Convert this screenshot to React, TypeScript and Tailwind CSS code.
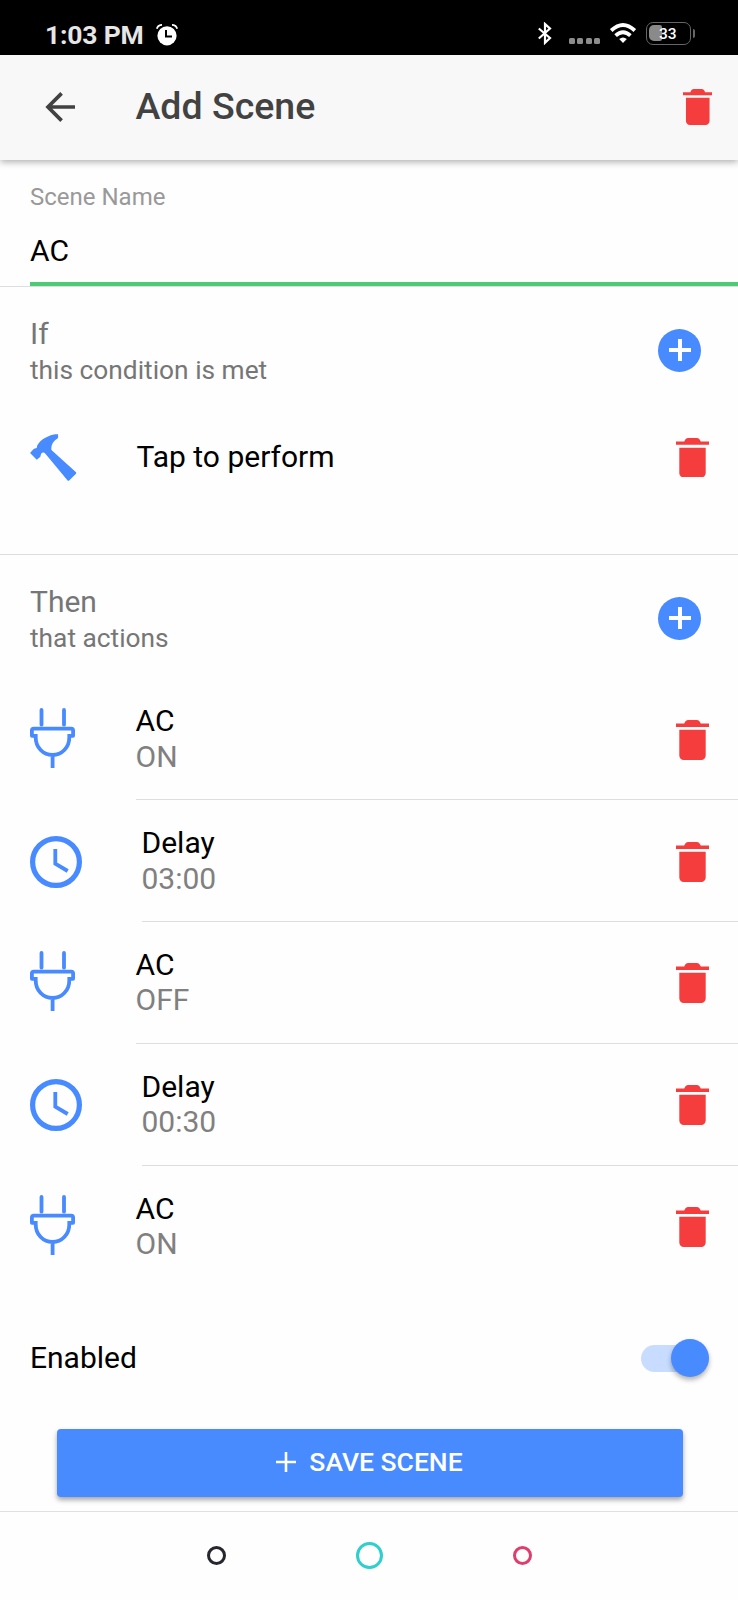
import { clsx } from 'clsx';

type IconProps = { className?: string };

const actions = [
  { type: 'device', title: 'AC', note: 'ON' },
  { type: 'delay', title: 'Delay', note: '03:00' },
  { type: 'device', title: 'AC', note: 'OFF' },
  { type: 'delay', title: 'Delay', note: '00:30' },
  { type: 'device', title: 'AC', note: 'ON' },
];

function TrashIcon({ className }: IconProps) {
  return (
    <svg viewBox="96 64 320 384" preserveAspectRatio="none" fill="#f53d3d" className={className}>
      <path d="M128 405c0 24 19 43 43 43h170c24 0 43-19 43-43V158H128v247zM416 98h-80c-10-22-18-34-38-34h-84c-20 0-28 12-38 34H96v32h320V98z" />
    </svg>
  );
}

function PlugIcon() {
  return (
    <svg viewBox="0 0 45 60" fill="none" stroke="#488aff" strokeWidth="3.8" className="-mt-[3px] h-[60px] w-[45px]">
      <path d="M11.5 1.9v14.8M34 1.9v14.8" strokeLinecap="round" />
      <path d="M5.7 27.8H1.9v-5.2q0-1.9 1.9-1.9h37.4q1.9 0 1.9 1.9v5.2h-3.8" strokeLinejoin="round" />
      <path d="M5.7 26v3.2c0 10.5 7.6 17.8 16.8 17.8s16.8-7.3 16.8-17.8V26M22.6 47v13" />
    </svg>
  );
}

function ClockIcon() {
  return (
    <svg viewBox="0 0 52 52" fill="none" stroke="#488aff" className="size-[52px]">
      <circle cx="26" cy="26" r="23.4" strokeWidth="5.2" />
      <path d="M25.3 13v14.6l12.4 7.4" strokeWidth="3.8" />
    </svg>
  );
}

function HammerIcon() {
  return (
    <svg viewBox="0 0 139 141" fill="#488aff" className="h-[47px] w-[46.5px]">
      <path d="M84 1H75C58 4 39 13 27 26c-5 6-7 11-7 16-4 1-7 1-10 4L0 57l20 20 10-8c2-3 2-8 3-10 4-5 9-5 13 0l66 80q3 3 6 0l19-19q3-3 0-6L64 48c-2-14 4-26 20-36z" />
    </svg>
  );
}

function AddButton() {
  return (
    <button className="mr-[37px] flex size-[43px] items-center justify-center rounded-full bg-[#488aff]">
      <svg viewBox="0 0 22 22" stroke="#fff" strokeWidth="4" className="size-[22px]">
        <path d="M11 0v22M0 11h22" />
      </svg>
    </button>
  );
}

function StatusBar() {
  return (
    <div className="flex h-[55px] items-start bg-black text-white">
      <span className="mt-[20px] ml-[45px] w-[100px] text-[26.5px] leading-[30px] font-bold tracking-[-0.2px] whitespace-nowrap text-[#e6e6e6]">
        1:03 PM
      </span>
      <svg viewBox="0 0 22 22" className="mt-[24px] ml-[11px] size-[22px]">
        <circle cx="11" cy="11.8" r="9.6" fill="#fff" />
        <path d="M.8 4.8Q1.8 1 6 .8M21.2 4.8Q20.2 1 16 .8" fill="none" stroke="#fff" strokeWidth="1.7" />
        <path d="M10 6v6.6h6" fill="none" stroke="#000" strokeWidth="2" />
      </svg>
      <div className="ml-auto flex">
        <svg viewBox="0 0 14 23" fill="none" stroke="#fff" strokeWidth="2.2" className="mt-[22px] h-[23px] w-[14px]">
          <path d="M.8 6.5 12 16l-5 4.8V2l5 4.6L.8 16.5" />
        </svg>
        <div className="mt-[38px] ml-[17px] flex gap-[2.3px]">
          {[0, 1, 2, 3].map((dot) => (
            <span key={dot} className="size-[6px] rounded-[1.5px] bg-[#8c8c8c]" />
          ))}
        </div>
        <svg viewBox="0 0 26 20" fill="none" stroke="#fff" strokeWidth="3.8" className="mt-[22.5px] ml-[10px] h-[20px] w-[26px]">
          <path d="M1.2 7.6q11.8-11.2 23.6 0" />
          <path d="M5.6 12.6q7.4-6.6 14.8 0" />
          <path d="m13 20-3.8-4q3.8-3 7.6 0z" fill="#fff" stroke="none" />
        </svg>
        <div className="relative mt-[22px] ml-[10px] h-[23px] w-[45px] rounded-[7px] border-[1.5px] border-[#666]">
          <div className="mt-[2px] ml-[2px] h-[16px] w-[13px] rounded-l-[5px] rounded-r-[2px] bg-[#8a8a8a]" />
          <span className="absolute top-[2px] left-[12px] text-[15.5px] leading-[19px] font-medium">33</span>
        </div>
        <span className="mt-[29px] mr-[43px] ml-[1.5px] h-[9px] w-[2.5px] rounded-r-full bg-[#666]" />
      </div>
    </div>
  );
}

function SectionHeading({ title, subtitle }: { title: string; subtitle: string }) {
  return (
    <div className="flex items-start justify-between pl-[30px] text-[#767676]">
      <div>
        <h2 className="text-[30px] leading-[37px]">{title}</h2>
        <p className="text-[26.3px] leading-[36px]">{subtitle}</p>
      </div>
      <div className="pt-[13.5px]">
        <AddButton />
      </div>
    </div>
  );
}

export default function App() {
  return (
    <div className="flex h-[1600px] w-[738px] flex-col bg-[#fefefe] font-[Roboto,sans-serif] text-black">
      <StatusBar />

      <header className="z-10 flex h-[105px] shrink-0 items-center bg-[#f8f8f8] pb-[2px] shadow-[0_2px_7px_rgba(0,0,0,0.32)]">
        <svg viewBox="0 0 30 30" fill="none" stroke="#424242" strokeWidth="3.7" className="ml-[45px] size-[30px]">
          <path d="M30 15H3M16.6 1.4 3 15l13.6 13.6" />
        </svg>
        <h1 className="ml-[60.5px] pb-[2px] text-[37.5px] leading-[44px] font-medium text-[#424242]">Add Scene</h1>
        <TrashIcon className="mr-[26px] ml-auto h-[36px] w-[29.5px]" />
      </header>

      <label className="block h-[127px] border-b border-[#dedede] pt-[24px]">
        <span className="block pl-[30px] text-[24px] leading-[26px] text-[#999]">Scene Name</span>
        <span className="mt-[23px] block pl-[30px] text-[30px] leading-[35px]">AC</span>
        <span className="mt-[14px] ml-[30px] block h-[4px] bg-[#4ccb74]" />
      </label>

      <section className="h-[268px] shrink-0 border-b border-[#dedede] pt-[28px]">
        <SectionHeading title="If" subtitle="this condition is met" />
        <div className="mt-[46px] flex items-center pr-[29px] pl-[30px]">
          <HammerIcon />
          <span className="ml-[60px] pb-[2px] text-[30px] leading-[35px]">Tap to perform</span>
          <TrashIcon className="ml-auto h-[39.5px] w-[33px]" />
        </div>
      </section>

      <section className="pt-[28px]">
        <SectionHeading title="Then" subtitle="that actions" />
        <ul className="mt-[22.5px]">
          {actions.map(({ type, title, note }, index) => (
            <li key={index} className="flex h-[121.75px] pl-[30px]">
              <div
                className={clsx(
                  'flex shrink-0 items-center',
                  type === 'delay' ? 'w-[111.5px] pt-[1px]' : 'w-[105.5px]'
                )}
              >
                {type === 'delay' ? <ClockIcon /> : <PlugIcon />}
              </div>
              <div
                className={clsx(
                  'flex flex-1 items-center justify-between pt-[2px] pr-[29px]',
                  index < actions.length - 1 && 'border-b-[1.5px] border-[#dedede]'
                )}
              >
                <div className="pb-[2px] text-[30px] leading-[35.5px]">
                  <h3>{title}</h3>
                  <p className="text-[#808080]">{note}</p>
                </div>
                <TrashIcon className="h-[40px] w-[33px]" />
              </div>
            </li>
          ))}
        </ul>
      </section>

      <div className="mt-[52px] flex h-[38px] shrink-0 items-center justify-between pr-[29px] pl-[30px]">
        <span className="pb-[1px] text-[30px] leading-[37px]">Enabled</span>
        <div className="flex h-[27px] w-[68px] items-center justify-end rounded-full bg-[#c8dcff]">
          <span className="size-[38px] rounded-full bg-[#488aff] shadow-[0_3px_5px_rgba(0,0,0,0.3)]" />
        </div>
      </div>

      <button className="mx-[57px] mt-[52px] flex h-[68px] w-[626px] shrink-0 items-center justify-center gap-[13px] rounded-[4px] bg-[#488aff] pr-[1px] pb-[3px] text-[26.5px] font-medium text-white shadow-[0_3px_5px_rgba(0,0,0,0.35)]">
        <svg viewBox="0 0 20 20" stroke="#fff" strokeWidth="2.6" className="size-[20px]">
          <path d="M10 0v20M0 10h20" />
        </svg>
        SAVE SCENE
      </button>

      <nav className="mt-[14px] flex flex-1 items-center justify-center border-t border-[#e0e0e0] pb-[2px]">
        <div className="flex w-[153px] justify-center">
          <span className="size-[19px] rounded-full border-3 border-[#26262e]" />
        </div>
        <div className="flex w-[153px] justify-center">
          <span className="size-[27px] rounded-full border-3 border-[#2ecfcd]" />
        </div>
        <div className="flex w-[153px] justify-center">
          <span className="size-[19px] rounded-full border-3 border-[#dc3f6c]" />
        </div>
      </nav>
    </div>
  );
}
